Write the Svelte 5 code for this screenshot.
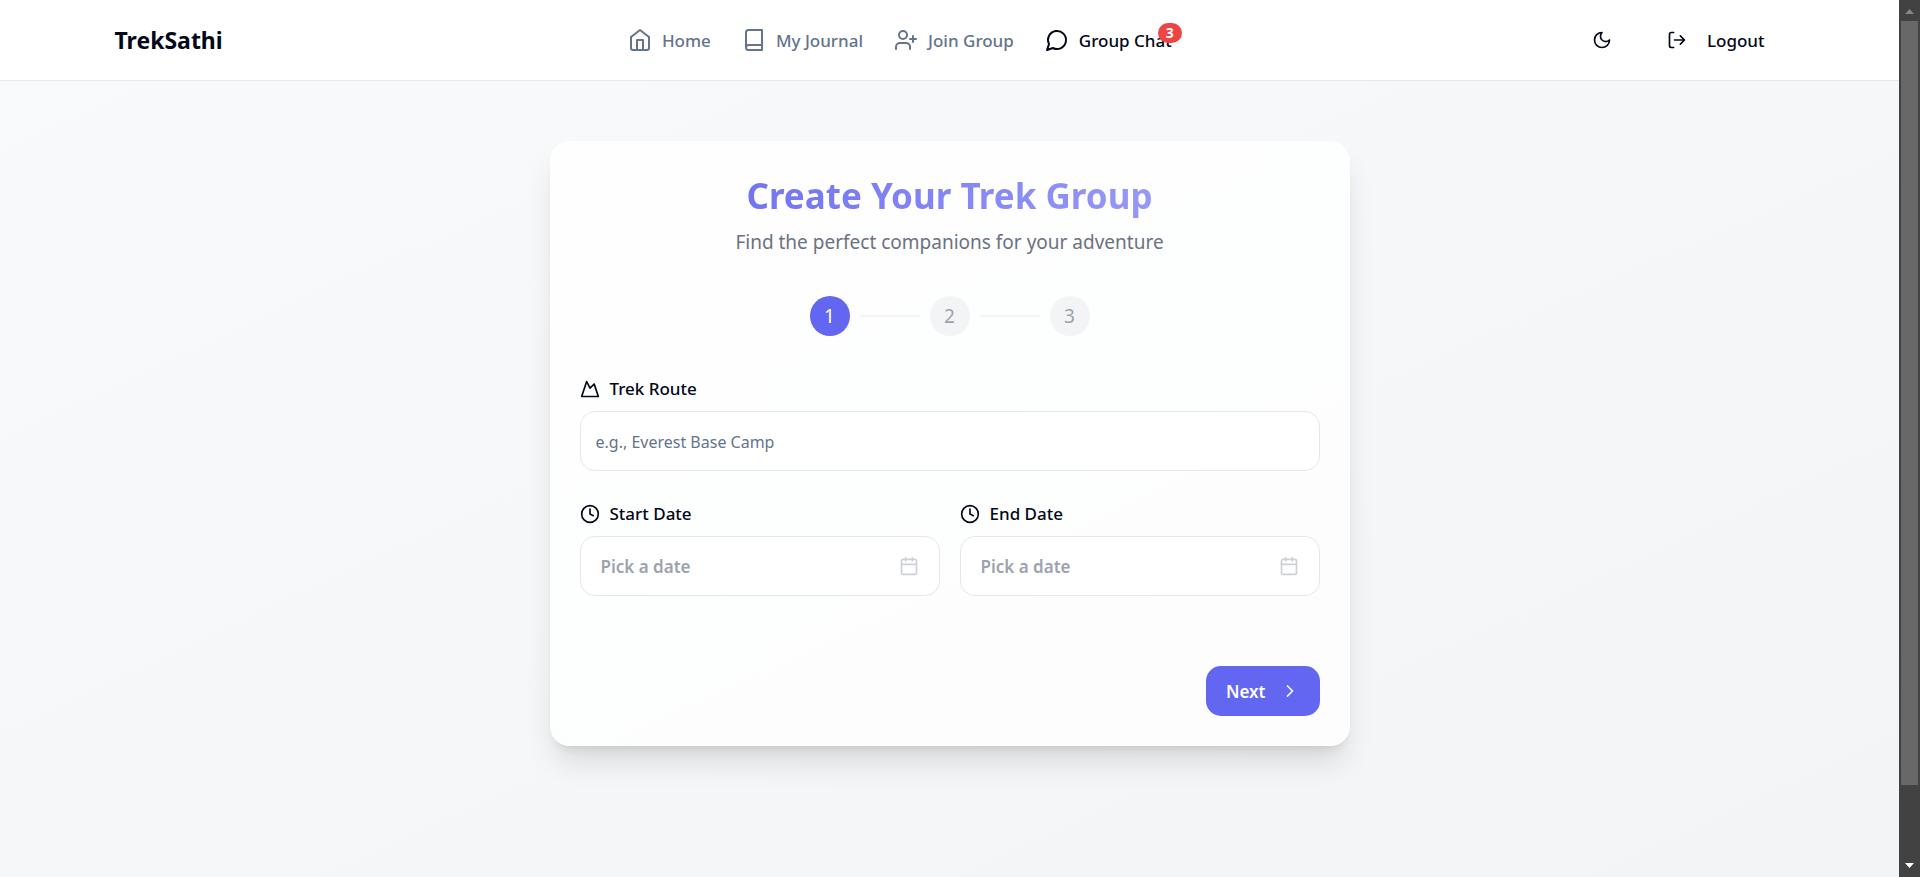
<script lang="ts">
  const links = [
    { label: "Home", icon: "home" },
    { label: "My Journal", icon: "book" },
    { label: "Join Group", icon: "user-plus" },
    { label: "Group Chat", icon: "chat", active: true, badge: 3 }
  ];

  const steps = [1, 2, 3];
  const dates = [
    { id: "start-date", label: "Start Date" },
    { id: "end-date", label: "End Date" }
  ];

  let currentStep = $state(1);
  let route = $state("");

  function next(): void {
    currentStep = Math.min(currentStep + 1, steps.length);
  }
</script>

{#snippet icon(name: string, size: number)}
  <svg
    width={size}
    height={size}
    viewBox="0 0 24 24"
    fill="none"
    stroke="currentColor"
    stroke-width="2"
    stroke-linecap="round"
    stroke-linejoin="round"
    aria-hidden="true"
  >
    {#if name === "home"}
      <path d="M3 9l9-7 9 7v11a2 2 0 0 1-2 2H5a2 2 0 0 1-2-2z" />
      <path d="M9 22V12h6v10" />
    {:else if name === "book"}
      <path d="M4 19.5v-15A2.5 2.5 0 0 1 6.5 2H20v20H6.5a2.5 2.5 0 0 1 0-5H20" />
    {:else if name === "user-plus"}
      <path d="M16 21v-2a4 4 0 0 0-4-4H6a4 4 0 0 0-4 4v2" />
      <circle cx="9" cy="7" r="4" />
      <path d="M19 8v6M22 11h-6" />
    {:else if name === "chat"}
      <path d="M7.9 20A9 9 0 1 0 4 16.1L2 22Z" />
    {:else if name === "moon"}
      <path d="M12 3a6 6 0 0 0 9 9 9 9 0 1 1-9-9Z" />
    {:else if name === "logout"}
      <path d="M8 21H5a2 2 0 0 1-2-2V5a2 2 0 0 1 2-2h3" />
      <path d="M16 17l5-5-5-5M21 12H9" />
    {:else if name === "mountain"}
      <path d="M8 3l4 8 5-5 5 15H2L8 3z" />
    {:else if name === "clock"}
      <circle cx="12" cy="12" r="10" />
      <path d="M12 6v6l4 2" />
    {:else if name === "calendar"}
      <path d="M8 2v4M16 2v4M3 10h18" />
      <rect x="3" y="4" width="18" height="18" rx="2" />
    {:else if name === "chevron"}
      <path d="M9 18l6-6-6-6" />
    {/if}
  </svg>
{/snippet}

<div class="screen">
  <div class="page">
    <header class="topbar">
      <div class="topbar-inner">
        <a class="brand" href="#home">TrekSathi</a>

        <nav class="links" aria-label="Main">
          {#each links as link (link.label)}
            <a class="link" class:active={link.active} href="#{link.icon}">
              {@render icon(link.icon, 24)}
              <span>{link.label}</span>
              {#if link.badge}
                <span class="badge">{link.badge}</span>
              {/if}
            </a>
          {/each}
        </nav>

        <div class="actions">
          <button class="icon-btn" type="button" aria-label="Toggle theme">
            {@render icon("moon", 20)}
          </button>
          <button class="logout" type="button">
            {@render icon("logout", 20)}
            Logout
          </button>
        </div>
      </div>
    </header>

    <main class="content">
      <form class="card" onsubmit={(event) => event.preventDefault()}>
        <h1 class="title">Create Your Trek Group</h1>
        <p class="subtitle">Find the perfect companions for your adventure</p>

        <ol class="steps">
          {#each steps as step (step)}
            <li class="step" class:current={step === currentStep}>
              <span class="step-number">{step}</span>
            </li>
          {/each}
        </ol>

        <div class="field">
          <label class="field-label" for="route">
            {@render icon("mountain", 20)}
            Trek Route
          </label>
          <input
            id="route"
            class="control"
            type="text"
            placeholder="e.g., Everest Base Camp"
            bind:value={route}
          />
        </div>

        <div class="dates">
          {#each dates as date (date.id)}
            <div class="field">
              <label class="field-label" for={date.id}>
                {@render icon("clock", 20)}
                {date.label}
              </label>
              <button id={date.id} class="control date-btn" type="button">
                <span>Pick a date</span>
                {@render icon("calendar", 20)}
              </button>
            </div>
          {/each}
        </div>

        <div class="footer">
          <button class="next" type="button" onclick={next}>
            Next
            {@render icon("chevron", 20)}
          </button>
        </div>
      </form>
    </main>
  </div>

  <div class="scrollbar" aria-hidden="true">
    <svg class="arrow up" width="21" height="21" viewBox="0 0 21 21">
      <path d="M6 14h9L10.5 9z" />
    </svg>
    <div class="thumb"></div>
    <svg class="arrow down" width="21" height="21" viewBox="0 0 21 21">
      <path d="M6 7h9L10.5 12z" />
    </svg>
  </div>
</div>

<style>
  :global(body) {
    margin: 0;
  }

  .screen {
    display: flex;
    height: 100vh;
    overflow: hidden;
    font-family: "Segoe UI", "Noto Sans", "Open Sans", sans-serif;
    font-size: 17px;
    line-height: 25px;
    color: #020817;
  }

  .page {
    flex: 1;
    min-width: 0;
    display: flex;
    flex-direction: column;
    background: linear-gradient(to bottom right, #f9fafb, #f3f4f6);
  }

  svg {
    display: block;
    flex-shrink: 0;
  }

  a {
    color: inherit;
    text-decoration: none;
  }

  button,
  input {
    box-sizing: border-box;
    margin: 0;
    font: inherit;
    color: inherit;
  }

  button {
    border: none;
    background: none;
    cursor: pointer;
  }

  .topbar {
    background: #fff;
    border-bottom: 1px solid #e2e8f0;
  }

  .topbar-inner {
    max-width: 1670px;
    height: 80px;
    margin: 0 auto;
    display: flex;
    align-items: center;
    justify-content: space-between;
  }

  .brand {
    font-size: 23px;
    font-weight: 700;
    line-height: 36px;
  }

  .links {
    display: flex;
    gap: 31px;
  }

  .link {
    position: relative;
    display: flex;
    align-items: center;
    gap: 10px;
    color: #64748b;
    font-weight: 500;
  }

  .link.active {
    color: #020817;
  }

  .badge {
    position: absolute;
    top: -5px;
    right: -10px;
    padding: 0 8px;
    border-radius: 10px;
    background: #ef4444;
    color: #fff;
    font-size: 14px;
    font-weight: 700;
    line-height: 20px;
  }

  .actions {
    display: flex;
    align-items: center;
    gap: 20px;
  }

  .icon-btn {
    display: grid;
    place-items: center;
    width: 50px;
    height: 50px;
    padding: 0;
  }

  .logout {
    display: flex;
    align-items: center;
    gap: 20px;
    height: 50px;
    padding: 0 20px;
    font-weight: 500;
  }

  .content {
    padding: 60px 20px;
  }

  .card {
    box-sizing: border-box;
    max-width: 800px;
    margin: 0 auto;
    padding: 30px;
    border-radius: 20px;
    background: rgba(255, 255, 255, 0.8);
    box-shadow:
      0 20px 30px -5px rgba(0, 0, 0, 0.12),
      0 8px 10px -6px rgba(0, 0, 0, 0.1);
  }

  .title {
    margin: 0;
    background: linear-gradient(to right, #6366f1, #a5a6f9);
    background-clip: text;
    -webkit-background-clip: text;
    color: transparent;
    font-size: 35px;
    font-weight: 700;
    line-height: 50px;
    text-align: center;
  }

  .subtitle {
    margin: 7px 0 0;
    color: #6b7280;
    font-size: 19px;
    line-height: 28px;
    text-align: center;
  }

  .steps {
    display: flex;
    justify-content: center;
    gap: 10px;
    margin: 40px 0;
    padding: 0;
    list-style: none;
  }

  .step {
    display: flex;
    align-items: center;
    gap: 10px;
  }

  .step + .step::before {
    content: "";
    width: 60px;
    height: 2px;
    background: #f3f4f6;
  }

  .step-number {
    width: 40px;
    border-radius: 50%;
    background: #f3f4f6;
    color: #9ca3af;
    font-size: 19px;
    line-height: 40px;
    text-align: center;
  }

  .step.current .step-number {
    background: #6366f1;
    color: #fff;
  }

  .field {
    display: flex;
    flex-direction: column;
    gap: 10px;
  }

  .field-label {
    display: flex;
    align-items: center;
    gap: 10px;
    font-weight: 500;
  }

  .control {
    width: 100%;
    height: 60px;
    padding: 0 15px;
    border: 1px solid #e5e7eb;
    border-radius: 15px;
    background: #fff;
  }

  .control::placeholder {
    color: #64748b;
    font-size: 16px;
    opacity: 1;
  }

  .dates {
    display: grid;
    grid-template-columns: 1fr 1fr;
    gap: 20px;
    margin-top: 30px;
  }

  .date-btn {
    display: flex;
    align-items: center;
    justify-content: space-between;
    padding: 0 20px;
    color: #9ca3af;
    font-weight: 600;
  }

  .date-btn svg {
    opacity: 0.5;
  }

  .footer {
    display: flex;
    justify-content: flex-end;
    margin-top: 70px;
  }

  .next {
    display: flex;
    align-items: center;
    gap: 14px;
    height: 50px;
    padding: 0 20px;
    border-radius: 15px;
    background: #6366f1;
    color: #fff;
    font-weight: 600;
  }

  .scrollbar {
    display: flex;
    flex-direction: column;
    width: 21px;
    background: #424242;
  }

  .thumb {
    flex: 1;
    margin: 0 2px 71px;
    background: #686868;
  }

  .arrow.up {
    fill: #868686;
  }

  .arrow.down {
    fill: #fff;
  }
</style>
